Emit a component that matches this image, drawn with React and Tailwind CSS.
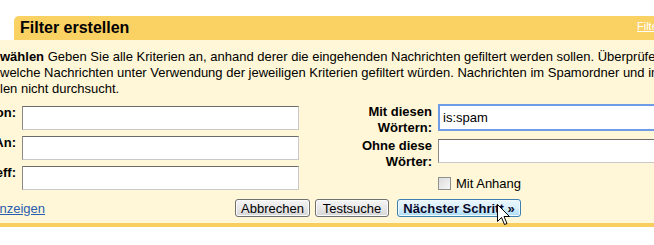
export default function App() {
  const inputCls =
    "block w-[277px] h-[24px] shrink-0 bg-white border border-t-[#6b6b6b] border-l-[#8a8a8a] border-r-[#c9c9c9] border-b-[#c9c9c9] outline-none px-[3px]";
  return (
    <div className="relative w-[654px] h-[245px] overflow-hidden bg-white font-['Liberation_Sans',Arial,sans-serif] text-[13px] text-black">
      <div className="h-[16px]" />
      <div className="ml-[14px] h-[24px] bg-[#fad163] rounded-tl-[5px] flex items-start pl-[6px] overflow-hidden whitespace-nowrap">
        <span className="w-[617px] shrink-0 pt-[3px] text-[16px] leading-[18px] font-bold">Filter erstellen</span>
        <a className="mt-[5px] text-[11px] leading-[11px] text-white underline">Filter verwenden</a>
      </div>

      <div className="bg-[#fff7d7] border-b-4 border-[#f8ce5e] pt-[9px] pb-[6px]">
        <div className="leading-[16px] whitespace-nowrap">
          <div>
            <b>wählen</b> Geben Sie alle Kriterien an, anhand derer die eingehenden Nachrichten gefiltert werden sollen. Überprüfen Sie mit „Testsuche“,
          </div>
          <div>
            welche Nachrichten unter Verwendung der jeweiligen Kriterien gefiltert würden. Nachrichten im Spamordner und im Papierkorb
          </div>
          <div>len nicht durchsucht.</div>
        </div>

        <div className="mt-[7px] flex">
          <div className="-ml-[44px] shrink-0 flex flex-col gap-[6px] pt-[2px]">
            {["Von:", "An:", "Betreff:"].map((l) => (
              <div key={l} className="flex items-start gap-[6px]">
                <div className="w-[60px] shrink-0 text-right font-bold leading-[14px]">{l}</div>
                <input className={inputCls} readOnly defaultValue="" />
              </div>
            ))}
          </div>

          <div className="ml-[33px] shrink-0 flex flex-col">
            <div className="flex items-start gap-[6px]">
              <div className="w-[100px] shrink-0 text-right font-bold leading-[16px]">
                Mit diesen
                <br />
                Wörtern:
              </div>
              <input
                className="block w-[277px] h-[27px] shrink-0 bg-white border-2 border-[#6f9ce6] outline-none px-[3px]"
                readOnly
                defaultValue="is:spam"
              />
            </div>
            <div className="mt-[2px] flex items-start gap-[6px]">
              <div className="w-[100px] shrink-0 text-right font-bold leading-[16px]">
                Ohne diese
                <br />
                Wörter:
              </div>
              <input className={inputCls + " mt-px"} readOnly defaultValue="" />
            </div>
            <div className="mt-[7px] ml-[106px] flex items-center gap-[5px] h-[13px]">
              <span className="block w-[13px] h-[13px] shrink-0 border border-[#8e8f8f] bg-gradient-to-br from-[#dcdcdc] to-[#f7f7f7]" />
              <span className="leading-[15px]">Mit Anhang</span>
            </div>
          </div>
        </div>

        <div className="mt-[9px] flex items-start">
          <div className="w-[45px] shrink-0 overflow-hidden flex justify-end">
            <a className="mt-[2px] shrink-0 whitespace-nowrap leading-[16px] text-[#2a5db0] underline">Optionen anzeigen</a>
          </div>
          <button className="ml-[190px] w-[75px] h-[18px] shrink-0 rounded-[3px] border border-[#707070] bg-gradient-to-b from-[#f4f4f4] via-[#e8e8e8] to-[#d6d6d6] text-center leading-[15px] shadow-[inset_0_0_0_1px_#fcfcfc]">
            Abbrechen
          </button>
          <button className="ml-[5px] w-[74px] h-[18px] shrink-0 rounded-[3px] border border-[#707070] bg-gradient-to-b from-[#f4f4f4] via-[#e8e8e8] to-[#d6d6d6] text-center leading-[15px] shadow-[inset_0_0_0_1px_#fcfcfc]">
            Testsuche
          </button>
          <button className="ml-[8px] w-[124px] h-[18px] shrink-0 rounded-[3px] border border-[#3c7fb1] bg-gradient-to-b from-[#eaf6fd] via-[#d9f0fc] to-[#a9dbf6] text-center font-bold leading-[15px] text-[#0a0a2a] whitespace-nowrap shadow-[inset_0_0_0_1px_#f0f9fe]">
            Nächster Schritt »
          </button>
        </div>
      </div>

      <svg
        className="absolute left-[497px] top-[204px]"
        width="13"
        height="22"
        viewBox="0 0 13 22"
      >
        <path
          d="M0.5 0.5 L0.5 17.5 L4.5 13.5 L7.5 20.5 L10 19.5 L7 12.5 L12.5 12.5 Z"
          fill="#ffffff"
          stroke="#000000"
          strokeWidth="1"
          strokeLinejoin="miter"
        />
      </svg>
    </div>
  );
}
